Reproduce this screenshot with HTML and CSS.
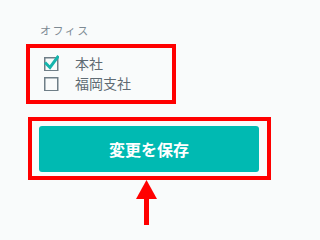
FILE: index.html
```html
<!DOCTYPE html>
<html lang="ja">
<head>
<meta charset="utf-8">
<link rel="stylesheet" href="styles.css">
</head>
<body>
<div class="page">
  <div class="label">オフィス</div>
  <div class="office-box">
    <div class="row">
      <svg class="cb" width="15" height="18" viewBox="0 0 15 18">
        <rect x="0.75" y="4.75" width="13" height="13" fill="none" stroke="#6f7e87" stroke-width="1.5"/>
        <path d="M1 9.5 L6 14.5 L14.5 3" fill="none" stroke="#14b4ac" stroke-width="3"/>
      </svg>
      <span class="opt">本社</span>
    </div>
    <div class="row">
      <svg class="cb" width="15" height="18" viewBox="0 0 15 18">
        <rect x="0.75" y="4.75" width="13" height="13" fill="none" stroke="#6f7e87" stroke-width="1.5"/>
      </svg>
      <span class="opt">福岡支社</span>
    </div>
  </div>
  <div class="save-box">
    <button class="save">変更を保存</button>
  </div>
  <svg class="arrow" width="21" height="45" viewBox="0 0 21 45">
    <polygon points="10.5,0 0,19 21,19" fill="#ff0000"/>
    <rect x="8" y="18" width="5" height="27" fill="#ff0000"/>
  </svg>
</div>
</body>
</html>
```
FILE: styles.css
```css
html, body {
  margin: 0;
  padding: 0;
  background: #f9fbfb;
  font-family: "Noto Sans CJK JP", "Noto Sans", sans-serif;
}
.page {
  display: flex;
  flex-direction: column;
  padding-top: 22px;
}
.label {
  margin-left: 40px;
  font-size: 11px;
  line-height: 16px;
  color: #7d8a93;
  letter-spacing: 1.5px;
}
.office-box {
  margin-top: 6px;
  margin-left: 26px;
  width: 150px;
  height: 60px;
  box-sizing: border-box;
  border: 4px solid #ff0000;
  padding: 5px 0 0 14px;
  display: flex;
  flex-direction: column;
}
.row {
  display: flex;
  align-items: center;
  height: 20px;
}
.cb {
  flex: none;
  margin-top: -3px;
}
.opt {
  margin-left: 16px;
  font-size: 14px;
  color: #5f6b73;
  line-height: 20px;
}
.save-box {
  margin-top: 13px;
  margin-left: 28px;
  width: 243px;
  height: 63px;
  box-sizing: border-box;
  border: 4px solid #ff0000;
  padding: 5px 8px 4px 7px;
  display: flex;
}
.save {
  flex: 1;
  border: none;
  border-radius: 3px;
  background: #00bab2;
  color: #ffffff;
  font-family: "Noto Sans CJK JP", sans-serif;
  font-size: 16px;
  font-weight: bold;
  padding: 0;
}
.arrow {
  margin-left: 136px;
  display: block;
}
```
